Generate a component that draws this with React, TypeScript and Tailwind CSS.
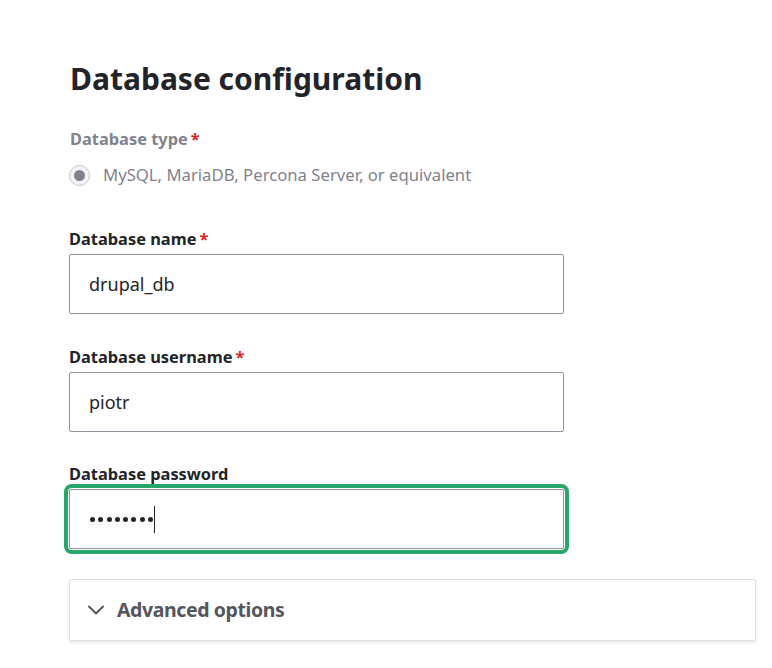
import { ChevronDown } from "lucide-react";

const font = { fontFamily: '"Noto Sans", "Open Sans", sans-serif' };

function Label({ text, required, muted }: { text: string; required?: boolean; muted?: boolean }) {
  return (
    <div className={`h-6 flex items-center text-[16.4px] font-bold leading-6 ${muted ? "text-[#82828c]" : "text-[#232429]"}`}>
      <span>{text}</span>
      {required && <span className="ml-[3px] text-[#dc2323]">*</span>}
    </div>
  );
}

function Field({ label, value, required }: { label: string; value: string; required?: boolean }) {
  return (
    <div>
      <Label text={label} required={required} />
      <div className="mt-[3px] w-[495px] h-[60px] flex items-center px-[19px] border border-[#8e929c] rounded-[2px] bg-white text-[18px] text-[#232429]">{value}</div>
    </div>
  );
}

export default function App() {
  return (
    <main className="min-h-[668px] bg-white pl-[69px] pt-[60px]" style={font}>
      <h1 className="text-[30px] leading-[38px] font-bold text-[#232429] ml-[1px]">Database configuration</h1>
      <div className="mt-[29px] ml-[1px]"><Label text="Database type" required muted /></div>
      <div className="mt-[13px] flex items-center gap-[13px] h-[22px]">
        <span className="w-[21px] h-[21px] rounded-full border border-[#c4c5c9] bg-[#f3f4f7] flex items-center justify-center">
          <span className="w-[11px] h-[11px] rounded-full bg-[#82828c]" />
        </span>
        <span className="text-[16.7px] text-[#82828c]">MySQL, MariaDB, Percona Server, or equivalent</span>
      </div>
      <div className="mt-[41px]"><Field label="Database name" value="drupal_db" required /></div>
      <div className="mt-[31px]"><Field label="Database username" value="piotr" required /></div>
      <div className="mt-[30px]">
        <Label text="Database password" />
        <div className="mt-[3px] w-[495px] h-[60px] rounded-[3px] shadow-[0_0_0_1px_#fff,0_0_0_5px_#26a769]">
          <div className="h-full flex items-center px-[20px] border border-[#8e929c] rounded-[2px] bg-white">
            <span className="flex items-center gap-[3.3px]">
              {Array.from({ length: 8 }).map((_, i) => (
                <span key={i} className="w-[5px] h-[5px] rounded-full bg-[#232429]" />
              ))}
            </span>
            <span className="ml-[1px] w-px h-[27px] bg-[#232429]" />
          </div>
        </div>
      </div>
      <div className="mt-[30px] w-[687px] h-[62px] border border-[#dedfe4] rounded-[2px] bg-white shadow-[0_2px_4px_rgba(0,0,0,0.1)] flex items-center pl-[12px]">
        <ChevronDown size={28} strokeWidth={1.7} className="text-[#55565b]" />
        <span className="ml-[7px] text-[19.5px] font-bold text-[#55565b] tracking-[-0.4px]">Advanced options</span>
      </div>
    </main>
  );
}
